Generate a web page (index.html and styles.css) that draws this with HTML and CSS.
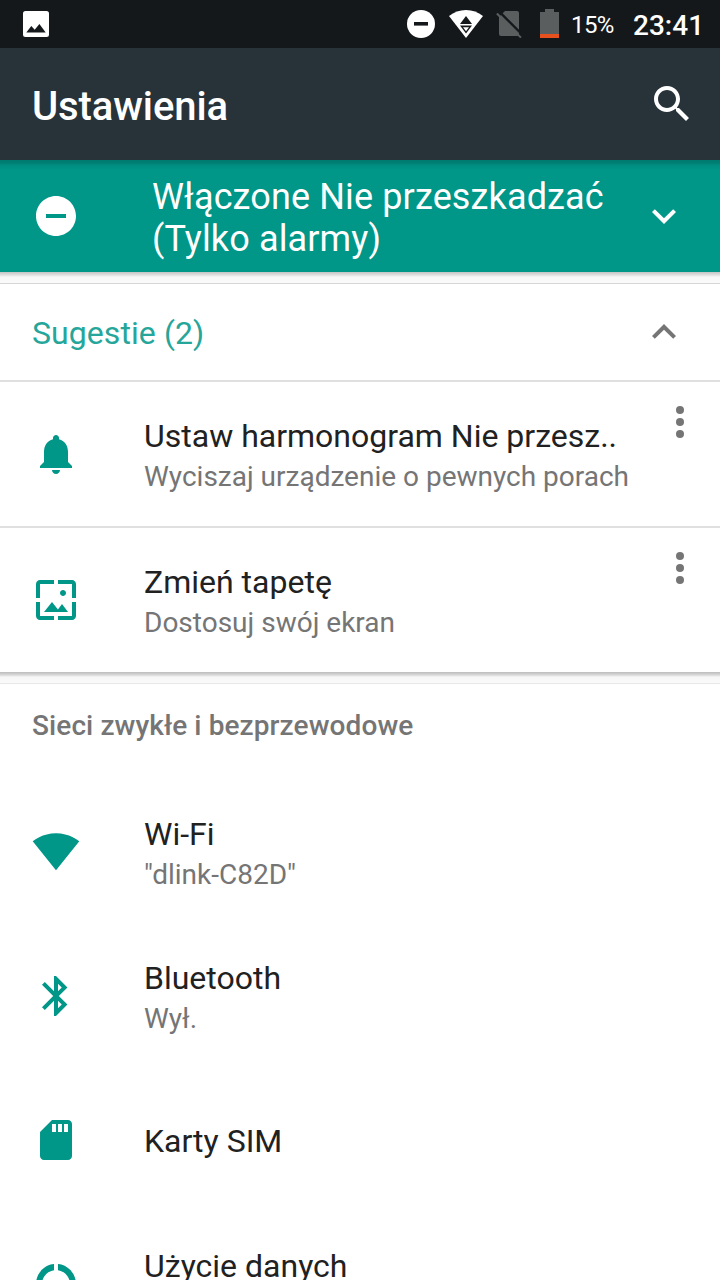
FILE: index.html
```
<!DOCTYPE html>
<html lang="pl">
<head>
    <meta charset="UTF-8">
    <meta name="viewport" content="width=device-width, initial-scale=1.0">
    <title>Ustawienia</title>
    <link rel="stylesheet" href="styles.css">
</head>
<body>
    <!-- Pasek stanu -->
    <div class="status-bar">
        <svg class="st-image" width="26" height="26" viewBox="0 0 26 26">
            <path fill="#fff" fill-rule="evenodd" d="M2.5 0h21A2.5 2.5 0 0 1 26 2.5v21a2.5 2.5 0 0 1-2.5 2.5h-21A2.5 2.5 0 0 1 0 23.5v-21A2.5 2.5 0 0 1 2.5 0zM3.3 21.5h19.4L16.4 13l-4.7 5.7L8.3 15z"/>
        </svg>
        <svg class="st-dnd" width="28" height="28" viewBox="0 0 28 28">
            <circle cx="14" cy="14" r="14" fill="#fff"/>
            <rect x="7" y="12" width="14" height="3.6" fill="#14181b"/>
        </svg>
        <svg class="st-wifi" width="34" height="28" viewBox="0 0 34 28">
            <path fill="#fff" d="M0 6C5 2 10.5 0 17 0s12 2 17 6L17 28z"/>
            <path fill="#14181b" d="M17 6l6 8H11zM11 15.5h12L17 23.5z"/>
            <path fill="#fff" d="M14 17.3h6l-3 4z"/>
        </svg>
        <svg class="st-sim" width="26" height="28" viewBox="0 0 26 28">
            <path fill="#5a5e5f" d="M9 1h12a2 2 0 0 1 2 2v21a2 2 0 0 1-2 2H5a2 2 0 0 1-2-2V7z"/>
            <path stroke="#14181b" stroke-width="2.4" d="M3 1.4L27 25.4"/>
            <path stroke="#5a5e5f" stroke-width="2" d="M.9 3.5L25 27.6"/>
        </svg>
        <svg class="st-battery" width="19" height="29" viewBox="0 0 19 29">
            <path fill="#5a5e5f" d="M5 0h9v3h5v22H0V3h5z"/>
            <rect y="25" width="19" height="4" fill="#e8501e"/>
        </svg>
        <span class="percent">15%</span>
        <span class="clock">23:41</span>
    </div>

    <!-- Nagłówek -->
    <header class="toolbar">
        <h1>Ustawienia</h1>
        <svg class="icon" viewBox="0 0 24 24"><path d="M15.5 14h-.79l-.28-.27C15.41 12.59 16 11.11 16 9.5 16 5.91 13.09 3 9.5 3S3 5.91 3 9.5 5.91 16 9.5 16c1.61 0 3.09-.59 4.23-1.57l.27.28v.79l5 4.99L20.49 19l-4.99-5zm-6 0C7.01 14 5 11.99 5 9.5S7.01 5 9.5 5 14 7.01 14 9.5 11.99 14 9.5 14z"/></svg>
    </header>

    <!-- Nie przeszkadzać -->
    <div class="dnd">
        <svg class="icon" viewBox="0 0 24 24"><path d="M12 2C6.48 2 2 6.48 2 12s4.48 10 10 10 10-4.48 10-10S17.52 2 12 2zm5 11H7v-2h10v2z"/></svg>
        <div class="dnd-text">Włączone Nie przeszkadzać<br>(Tylko alarmy)</div>
        <svg class="icon" viewBox="0 0 24 24"><path d="M16.59 8.59L12 13.17 7.41 8.59 6 10l6 6 6-6z"/></svg>
    </div>
    <div class="gap"></div>

    <!-- Sugestie -->
    <div class="suggest-head">
        <span>Sugestie (2)</span>
        <svg class="icon" viewBox="0 0 24 24"><path d="M12 8l-6 6 1.41 1.41L12 10.83l4.59 4.58L18 14z"/></svg>
    </div>
    <div class="row suggestion">
        <svg class="icon" viewBox="0 0 24 24"><path d="M12 22c1.1 0 2-.9 2-2h-4c0 1.1.89 2 2 2zm6-6v-5c0-3.07-1.64-5.64-4.5-6.32V4c0-.83-.67-1.5-1.5-1.5s-1.5.67-1.5 1.5v.68C7.63 5.36 6 7.92 6 11v5l-2 2v1h16v-1l-2-2z"/></svg>
        <div class="text">
            <div class="title">Ustaw harmonogram Nie przesz..</div>
            <div class="summary">Wyciszaj urządzenie o pewnych porach</div>
        </div>
        <svg class="icon more" viewBox="0 0 24 24"><circle cx="12" cy="6" r="2"/><circle cx="12" cy="12" r="2"/><circle cx="12" cy="18" r="2"/></svg>
    </div>
    <div class="row suggestion">
        <svg class="icon" viewBox="0 0 24 24"><path d="M4 4h7V2H4c-1.1 0-2 .9-2 2v7h2V4zm6 9l-4 5h12l-3-4-2.03 2.71L10 13zm7-4.5c0-.83-.67-1.5-1.5-1.5S14 7.67 14 8.5s.67 1.5 1.5 1.5S17 9.33 17 8.5zM20 2h-7v2h7v7h2V4c0-1.1-.9-2-2-2zm0 18h-7v2h7c1.1 0 2-.9 2-2v-7h-2v7zM4 13H2v7c0 1.1.9 2 2 2h7v-2H4v-7z"/></svg>
        <div class="text">
            <div class="title">Zmień tapetę</div>
            <div class="summary">Dostosuj swój ekran</div>
        </div>
        <svg class="icon more" viewBox="0 0 24 24"><circle cx="12" cy="6" r="2"/><circle cx="12" cy="12" r="2"/><circle cx="12" cy="18" r="2"/></svg>
    </div>
    <div class="gap gap-light"></div>

    <!-- Sieci -->
    <h2>Sieci zwykłe i bezprzewodowe</h2>
    <div class="row">
        <svg class="icon" viewBox="0 0.4 24 24"><path d="M12.01 21.49L23.64 7c-.45-.34-4.93-4-11.64-4C5.28 3 .81 6.66.36 7l11.63 14.49.01.01z"/></svg>
        <div class="text">
            <div class="title">Wi-Fi</div>
            <div class="summary">"dlink-C82D"</div>
        </div>
    </div>
    <div class="row">
        <svg class="icon" viewBox="0 0 24 24"><path d="M17.71 7.71L12 2h-1v7.59L6.41 5 5 6.41 10.59 12 5 17.59 6.41 19 11 14.41V22h1l5.71-5.71-4.3-4.29 4.3-4.29zM13 5.83l1.88 1.88L13 9.59V5.83zm1.88 10.46L13 18.17v-3.76l1.88 1.88z"/></svg>
        <div class="text">
            <div class="title">Bluetooth</div>
            <div class="summary">Wył.</div>
        </div>
    </div>
    <div class="row">
        <svg class="icon" viewBox="0 0 24 24"><path d="M18 2h-8L4.02 8 4 20c0 1.1.9 2 2 2h12c1.1 0 2-.9 2-2V4c0-1.1-.9-2-2-2zm-6 6h-2V4h2v4zm3 0h-2V4h2v4zm3 0h-2V4h2v4z"/></svg>
        <div class="text single">
            <div class="title">Karty SIM</div>
        </div>
    </div>
    <div class="row">
        <svg class="icon" viewBox="0 0 24 24"><path d="M13 2.05v3.03c3.39.49 6 3.39 6 6.92 0 .9-.18 1.75-.48 2.54l2.6 1.53c.56-1.24.88-2.62.88-4.07 0-5.18-3.95-9.45-9-9.95zM12 19c-3.87 0-7-3.13-7-7 0-3.53 2.61-6.43 6-6.92V2.05c-5.06.5-9 4.76-9 9.95 0 5.52 4.47 10 9.99 10 3.31 0 6.24-1.61 8.06-4.09l-2.6-1.53C16.17 17.98 14.21 19 12 19z"/></svg>
        <div class="text">
            <div class="title">Użycie danych</div>
            <div class="summary">&nbsp;</div>
        </div>
    </div>
</body>
</html>
```
FILE: styles.css
```
/* Styl ogólny */
body {
    margin: 0;
    height: 1280px;
    overflow: hidden;
    background-color: #fff;
    color: #212121;
    font-family: Roboto, "Noto Sans", sans-serif;
}

.icon {
    flex: none;
    width: 48px;
    height: 48px;
    fill: #009688;
}

/* Pasek stanu */
.status-bar {
    display: flex;
    align-items: flex-start;
    height: 48px;
    background-color: #14181b;
    color: #fff;
}

.status-bar svg { flex: none; }
.st-image { margin: 11px 0 0 23px; }
.st-dnd { margin: 10px 0 0 358px; }
.st-wifi { margin: 10px 0 0 14px; }
.st-sim { margin: 10px 0 0 13px; }
.st-battery { margin: 9px 0 0 18px; }

.percent {
    margin-left: 12px;
    width: 62px;
    font-size: 24px;
    line-height: 50px;
    letter-spacing: -0.6px;
}

.clock {
    font-size: 28px;
    font-weight: 500;
    line-height: 51px;
}

/* Nagłówek */
.toolbar {
    display: flex;
    justify-content: space-between;
    align-items: center;
    height: 112px;
    padding: 0 24px 0 32px;
    background-color: #283339;
}

.toolbar h1 {
    margin: 4px 0 0;
    color: #fff;
    font-size: 40px;
    font-weight: 500;
    letter-spacing: -0.1px;
}

.toolbar .icon, .dnd .icon { fill: #fff; }

/* Nie przeszkadzać */
.dnd {
    display: flex;
    align-items: center;
    height: 112px;
    padding: 0 32px;
    background: linear-gradient(#007a6e, #007f73 3px, #008d80 5px, #009688 10px);
    color: #fff;
}

.dnd-text {
    flex: 1;
    margin-left: 72px;
    padding-top: 4px;
    font-size: 36px;
    line-height: 42px;
    letter-spacing: 0.13px;
}

/* Odstęp z cieniem między kartami */
.gap {
    box-sizing: border-box;
    height: 12px;
    background: linear-gradient(#c4c4c4, #e0e0e0 3px, #f8f8f8 5px, #fafafa);
    border-bottom: 1px solid #d6d6d6;
}

.gap-light {
    background: linear-gradient(#bcbcbc, #d8d8d8 3px, #f6f6f6 5px, #fafafa);
    border-bottom-color: #e8e8e8;
}

/* Sugestie */
.suggest-head {
    display: flex;
    justify-content: space-between;
    align-items: center;
    height: 96px;
    padding: 0 32px;
    color: #26a69a;
    font-size: 32px;
    letter-spacing: 0.07px;
}

.suggest-head span { padding-top: 2px; }
.suggest-head .icon { fill: #757575; }

.row {
    display: flex;
    align-items: center;
    height: 144px;
    padding: 0 16px 0 32px;
}

.suggestion { border-top: 2px solid #e0e0e0; }

.text {
    flex: 1;
    margin-left: 64px;
    white-space: nowrap;
}

.single { padding-top: 2px; }

.title {
    font-size: 32px;
    line-height: 38px;
}

.summary {
    padding-top: 4px;
    color: #757575;
    font-size: 28px;
    line-height: 36px;
    margin-bottom: -4px;
}

.more {
    align-self: flex-start;
    margin-top: 16px;
    fill: #757575;
}

/* Nagłówek sekcji */
h2 {
    margin: 0;
    height: 96px;
    padding-left: 32px;
    color: #757575;
    font-size: 28px;
    font-weight: 500;
    line-height: 84px;
    letter-spacing: 0.1px;
}
```
